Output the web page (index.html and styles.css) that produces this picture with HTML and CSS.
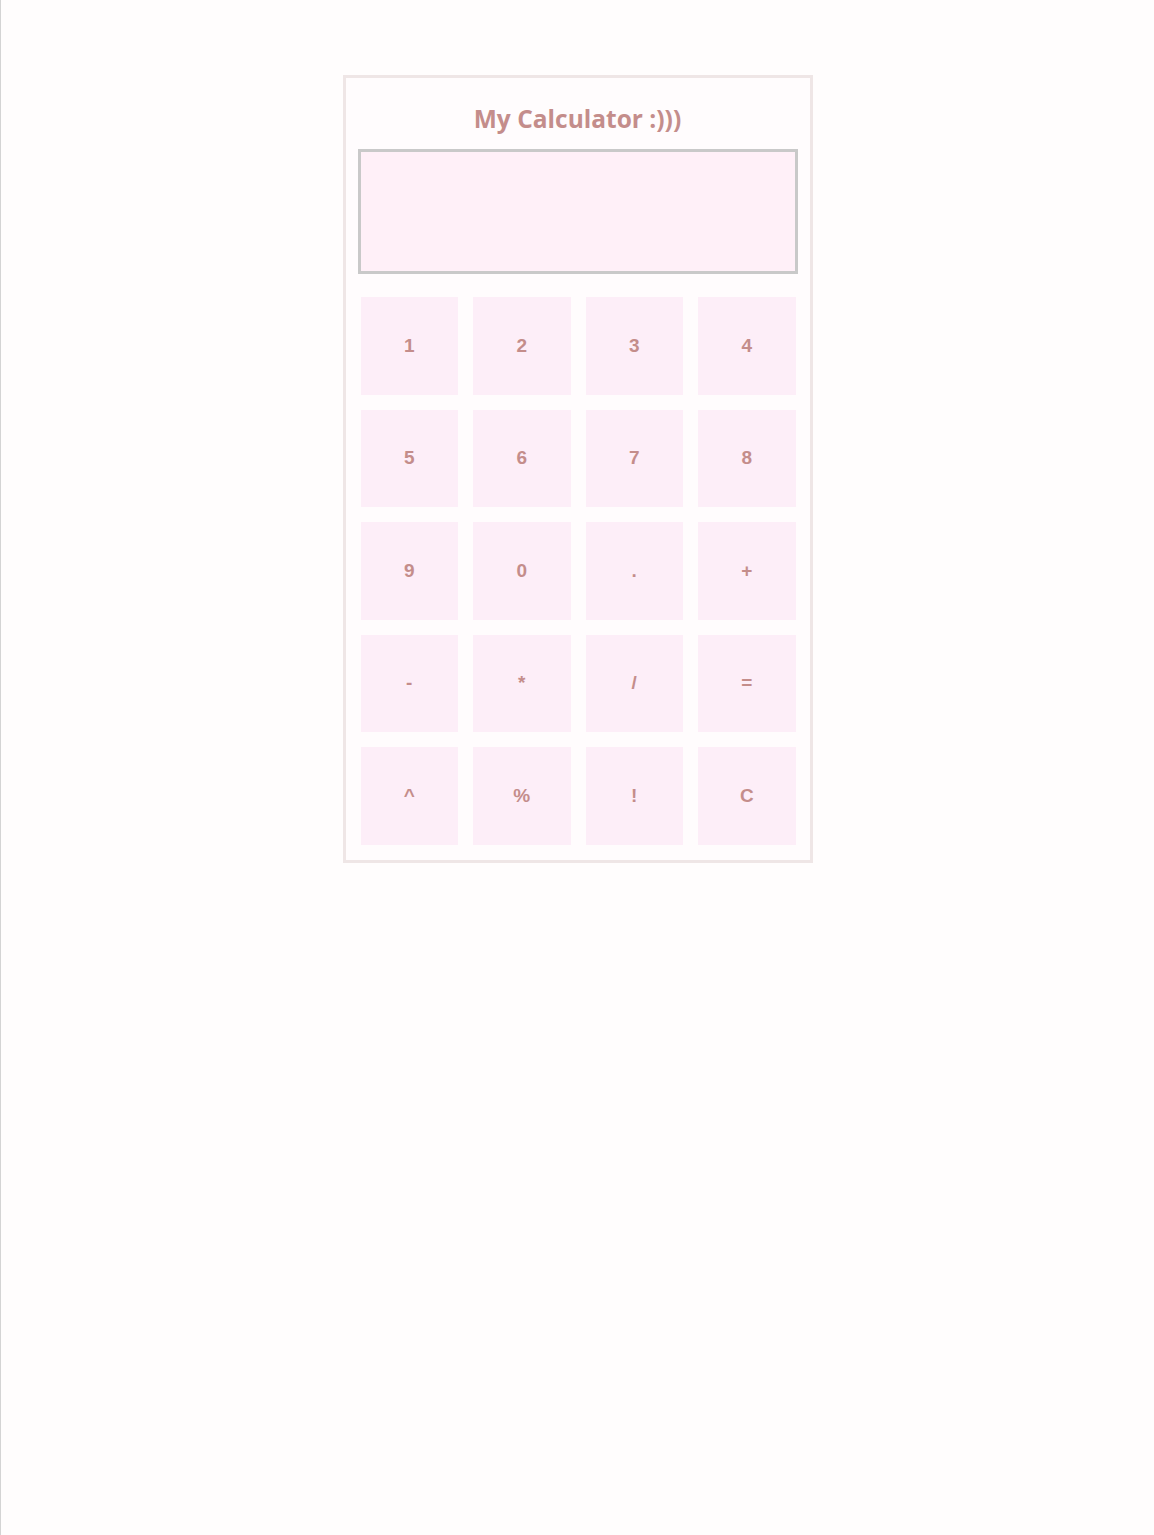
FILE: index.html
```html
<!DOCTYPE html>
<html>
<head>
<meta charset="utf-8">
<link rel="stylesheet" href="styles.css">
</head>
<body>
<div class="calc">
  <h1 class="title">My Calculator :)))</h1>
  <div class="display"></div>
  <div class="keys">
    <button class="key">1</button>
    <button class="key">2</button>
    <button class="key">3</button>
    <button class="key">4</button>
    <button class="key">5</button>
    <button class="key">6</button>
    <button class="key">7</button>
    <button class="key">8</button>
    <button class="key">9</button>
    <button class="key">0</button>
    <button class="key">.</button>
    <button class="key">+</button>
    <button class="key">-</button>
    <button class="key">*</button>
    <button class="key">/</button>
    <button class="key">=</button>
    <button class="key">^</button>
    <button class="key">%</button>
    <button class="key">!</button>
    <button class="key">C</button>
  </div>
</div>
</body>
</html>
```

FILE: styles.css
```css
html {
  background: #fffdfd;
  border-left: 1px solid #d4d4d4;
  min-height: 100%;
}
body {
  margin: 0;
  padding-top: 75px;
  font-family: "Open Sans", "Noto Sans", sans-serif;
}
.calc {
  width: 440px;
  margin: 0 auto;
  border: 3px solid #efe6e6;
  background: #fffcfd;
  padding: 12px 12px 15px 12px;
  box-sizing: content-box;
}
.title {
  margin: 11px 0 12px;
  text-align: center;
  font-size: 24.5px;
  font-weight: 700;
  line-height: 36px;
  color: #c48d8b;
}
.display {
  height: 119px;
  border: 3px solid #c9c9c9;
  background: #fff0f8;
}
.keys {
  display: grid;
  grid-template-columns: repeat(4, 1fr);
  grid-auto-rows: 97.5px;
  gap: 15px;
  margin: 23px 2px 0 3px;
}
.key {
  border: none;
  background: #fdeef8;
  color: #c48d8b;
  font-family: "Liberation Sans", Arial, sans-serif;
  font-weight: 700;
  font-size: 19px;
  padding: 0;
}
```
